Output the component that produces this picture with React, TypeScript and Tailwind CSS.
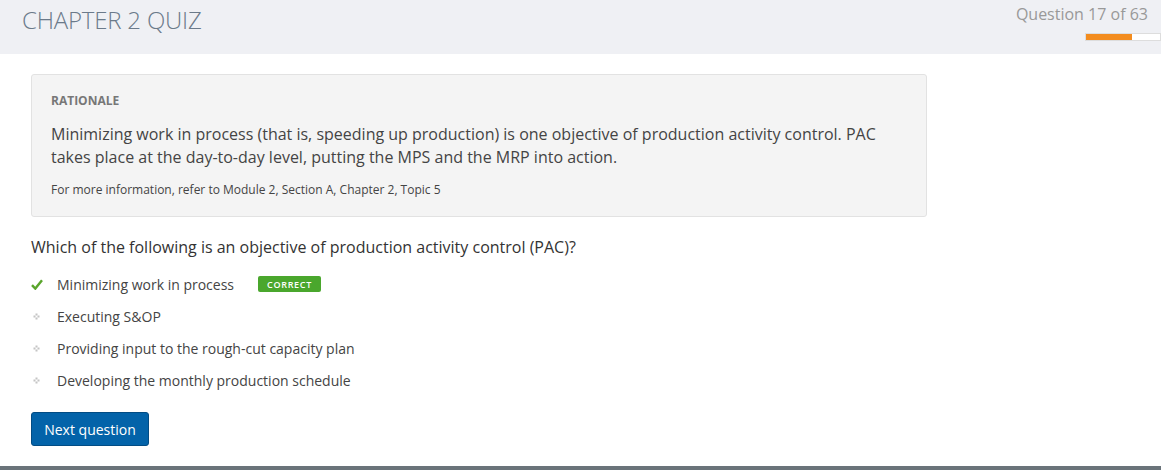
import React from "react";

const Bullet = () => (
  <svg width="7" height="7" viewBox="0 0 7 7" className="block">
    <rect x="2.5" y="0.5" width="2" height="2" fill="#c4c4c4" />
    <rect x="0.5" y="2.5" width="2" height="2" fill="#c4c4c4" />
    <rect x="4.5" y="2.5" width="2" height="2" fill="#c4c4c4" />
    <rect x="2.5" y="4.5" width="2" height="2" fill="#c4c4c4" />
  </svg>
);

const Check = () => (
  <svg width="12" height="11" viewBox="0 0 12 11" className="block">
    <path d="M1 6.2 L4.3 9.6 L11 1.2" stroke="#5aa52c" strokeWidth="2.4" fill="none" />
  </svg>
);

export default function App() {
  const options = [
    "Executing S&OP",
    "Providing input to the rough-cut capacity plan",
    "Developing the monthly production schedule",
  ];
  return (
    <div
      className="w-[1161px] h-[470px] bg-white flex flex-col overflow-hidden"
      style={{ fontFamily: '"Open Sans", sans-serif' }}
    >
      <header className="h-[54px] bg-[#eff0f4] flex justify-between shrink-0">
        <h1 className="pl-[22px] pt-[4px] text-[24px] leading-[32px] font-light text-[#6b7a8a] tracking-[-0.2px]">
          CHAPTER 2 QUIZ
        </h1>
        <div className="flex flex-col items-end pt-[4px] pr-[13px]">
          <div className="text-[16px] leading-[20px] text-[#999]">Question 17 of 63</div>
          <div className="mt-[9px] mr-[-13px] w-[76px] h-[8px] bg-white border border-[#ddd] flex">
            <div className="w-[46px] h-full bg-[#f38c1e]" />
          </div>
        </div>
      </header>

      <main className="flex-1 pl-[31px] pt-[20px]">
        <div className="w-[896px] bg-[#f4f4f4] border border-[#e2e2e2] rounded-[3px] pl-[19px] pr-[20px] pt-[18px] pb-[18px]">
          <div className="text-[12px] leading-[16px] font-bold text-[#777]">RATIONALE</div>
          <p className="mt-[14px] text-[16px] leading-[23px] text-[#444]">
            Minimizing work in process (that is, speeding up production) is one objective of production activity control. PAC takes place at the day-to-day level, putting the MPS and the MRP into action.
          </p>
          <p className="mt-[13px] text-[12px] leading-[16px] text-[#444]">
            For more information, refer to Module 2, Section A, Chapter 2, Topic 5
          </p>
        </div>

        <p className="mt-[19px] text-[16px] leading-[22px] text-[#333]">
          Which of the following is an objective of production activity control (PAC)?
        </p>

        <ul className="mt-[16px] flex flex-col gap-[12px]">
          <li className="flex items-center h-[20px]">
            <span className="w-[26px] flex items-center"><Check /></span>
            <span className="text-[14px] text-[#444]">Minimizing work in process</span>
            <span className="ml-[24px] h-[16px] px-[9px] flex items-center bg-[#4aa72d] rounded-[2px] text-white text-[9px] leading-none font-semibold tracking-[0.7px]">
              CORRECT
            </span>
          </li>
          {options.map((o) => (
            <li key={o} className="flex items-center h-[20px]">
              <span className="w-[26px] flex items-center pl-[2px]"><Bullet /></span>
              <span className="text-[14px] text-[#444]">{o}</span>
            </li>
          ))}
        </ul>

        <button className="mt-[22px] w-[118px] h-[34px] bg-[#0363a9] border border-[#024c84] rounded-[3px] text-white text-[14px] font-normal">
          Next question
        </button>
      </main>

      <div className="h-[4px] bg-[#6a737a] shrink-0" />
    </div>
  );
}
